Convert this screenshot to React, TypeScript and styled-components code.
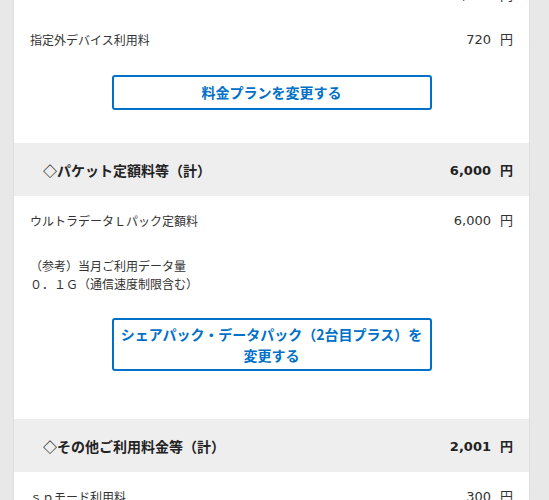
import React from "react";
import styled, { createGlobalStyle } from "styled-components";

const Global = createGlobalStyle`
  html, body { margin: 0; padding: 0; background: #e8e8e8; }
  body {
    font-family: "Noto Sans CJK JP", sans-serif;
    color: #333;
    overflow: hidden;
  }
`;

const Page = styled.div`
  height: 500px;
  overflow: hidden;
  padding-left: 13px;
`;

const Panel = styled.main`
  width: 517px;
  box-sizing: border-box;
  background: #fff;
  border-left: 1px solid #dedede;
  border-right: 1px solid #dedede;
  margin-top: -29px;
`;

const Section = styled.section`
  display: flex;
  flex-direction: column;
`;

const SectionHead = styled.div`
  height: 53px;
  background: #eeeeee;
  display: flex;
  align-items: center;
  justify-content: space-between;
  padding: 0 16px 0 29px;
`;

const HeadLabel = styled.h3`
  margin: 0;
  font-size: 14px;
  font-weight: 700;
  line-height: 18px;
  color: #222;
`;

const Body = styled.div`
  padding-top: 3px;
  display: flex;
  flex-direction: column;
`;

const Row = styled.div`
  display: flex;
  justify-content: space-between;
  align-items: center;
  padding: 12px 16px 13px;
  font-size: 12px;
  line-height: 18px;
  min-height: 18px;
`;

const Label = styled.span`
  color: #333;
`;

const Amount = styled.span<{ $bold?: boolean }>`
  font-family: "DejaVu Sans", "Noto Sans CJK JP", sans-serif;
  font-size: 13px;
  font-weight: ${(p) => (p.$bold ? 700 : 400)};
  color: ${(p) => (p.$bold ? "#222" : "#333")};
  white-space: nowrap;
`;

const Yen = styled.span`
  margin-left: 9px;
  font-family: "Noto Sans CJK JP", sans-serif;
`;

const Note = styled.p`
  margin: 0;
  padding: 14px 16px 12px;
  font-size: 12px;
  line-height: 18px;
  color: #333;
`;

const ButtonArea = styled.div<{ $tail: number }>`
  display: flex;
  justify-content: center;
  padding: 13px 0 ${(p) => p.$tail}px;
`;

const ChangeButton = styled.button`
  width: 320px;
  min-height: 35px;
  box-sizing: border-box;
  border: 2px solid #0070c8;
  border-radius: 3px;
  background: #fff;
  color: #0070c8;
  font-family: "Noto Sans CJK JP", sans-serif;
  font-weight: 700;
  font-size: 14px;
  line-height: 21px;
  padding: 3.5px 6px;
  text-align: center;
  cursor: pointer;
`;

type Item = { label: string; value: string };

const Price = ({ value, bold }: { value: string; bold?: boolean }) => (
  <Amount $bold={bold}>
    {value}
    <Yen>円</Yen>
  </Amount>
);

type SectionData = {
  title?: string;
  total?: string;
  items: Item[];
  note?: string[];
  button?: React.ReactNode;
  tail: number;
};

const sections: SectionData[] = [
  {
    items: [
      { label: "", value: "1,700" },
      { label: "指定外デバイス利用料", value: "720" },
    ],
    button: "料金プランを変更する",
    tail: 33,
  },
  {
    title: "◇パケット定額料等（計）",
    total: "6,000",
    items: [{ label: "ウルトラデータＬパック定額料", value: "6,000" }],
    note: ["（参考）当月ご利用データ量", "０．１Ｇ（通信速度制限含む）"],
    button: (
      <>
        シェアパック・データパック（2台目プラス）を
        <br />
        変更する
      </>
    ),
    tail: 48,
  },
  {
    title: "◇その他ご利用料金等（計）",
    total: "2,001",
    items: [
      { label: "ｓｐモード利用料", value: "300" },
      { label: "ユニバーサルサービス料", value: "2" },
    ],
    tail: 33,
  },
];

export default function App() {
  return (
    <>
      <Global />
      <Page>
        <Panel>
          {sections.map((s, i) => (
            <Section key={i}>
              {s.title && (
                <SectionHead>
                  <HeadLabel>{s.title}</HeadLabel>
                  <Price value={s.total ?? ""} bold />
                </SectionHead>
              )}
              <Body>
                {s.items.map((it, j) => (
                  <Row key={j}>
                    <Label>{it.label}</Label>
                    <Price value={it.value} />
                  </Row>
                ))}
                {s.note && (
                  <Note>
                    {s.note.map((line, k) => (
                      <React.Fragment key={k}>
                        {k > 0 && <br />}
                        {line}
                      </React.Fragment>
                    ))}
                  </Note>
                )}
                {s.button && (
                  <ButtonArea $tail={s.tail}>
                    <ChangeButton type="button">{s.button}</ChangeButton>
                  </ButtonArea>
                )}
              </Body>
            </Section>
          ))}
        </Panel>
      </Page>
    </>
  );
}
